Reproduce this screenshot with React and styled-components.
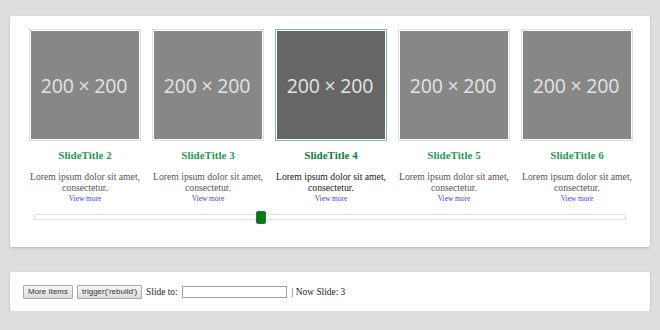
import React from "react";
import styled, { createGlobalStyle } from "styled-components";

const GlobalStyle = createGlobalStyle`
    html, body {
        margin: 0;
        padding: 0;
        background: #dedede;
        font-family: "Liberation Serif", "Times New Roman", serif;
    }
`

const Page = styled.div`
    padding: 16px 10px 0 10px;
    width: 640px;
`

const Panel = styled.section`
    background: #fff;
    box-shadow: 0 1px 3px rgba(0, 0, 0, 0.18);
    border-radius: 2px;
`

const CarouselPanel = styled(Panel)`
    padding: 13px 16px 25px 19px;
    height: 193px;
`

const Slides = styled.div`
    display: flex;
    gap: 11px;
`

const Slide = styled.div`
    width: 112px;
    display: flex;
    flex-direction: column;
    align-items: center;
    text-align: center;
`

const Frame = styled.div`
    border: 1px solid ${p => (p.$active ? "#7cc29c" : "#dddddd")};
    padding: 1px;
    background: #fff;
`

const Placeholder = styled.div`
    width: 108px;
    height: 108px;
    background: ${p => (p.$active ? "#666666" : "#878787")};
    color: #e4e4e4;
    display: flex;
    align-items: center;
    justify-content: center;
    font-family: "Open Sans", "Noto Sans", sans-serif;
    font-size: 19.5px;
    letter-spacing: -0.2px;
    padding-right: 2px;
    box-sizing: border-box;
`

const Title = styled.h4`
    margin: 7px 0 0 0;
    font-size: 11px;
    line-height: 14px;
    font-weight: bold;
    color: ${p => (p.$active ? "#0b7e40" : "#1f9a56")};
`

const Desc = styled.p`
    margin: 9px -4px 0 -4px;
    font-size: 9.7px;
    line-height: 11px;
    white-space: nowrap;
    color: ${p => (p.$active ? "#1a1a1a" : "#555555")};
`

const More = styled.a`
    font-size: 7.4px;
    line-height: 11px;
    color: #3b3bff;
    text-decoration: none;
`

const Track = styled.div`
    position: relative;
    margin: 10px 0 0 5px;
    width: 590px;
    height: 4px;
    border: 1px solid #e2e2e2;
`

const Thumb = styled.div`
    position: absolute;
    top: -4px;
    width: 8px;
    height: 11px;
    background: #008000;
    border: 1px solid #2d6a6a;
    border-radius: 2px;
`

const ControlPanel = styled(Panel)`
    margin-top: 25px;
    height: 39px;
    display: flex;
    align-items: center;
    gap: 3px;
    padding: 0 13px;
    font-size: 9.4px;
    color: #222;
`

const Button = styled.button`
    font-family: "Liberation Sans", Arial, sans-serif;
    font-size: 8px;
    height: 14px;
    padding: 0 4px;
    border: 1px solid #a9a9a9;
    border-radius: 1px;
    background: linear-gradient(#f6f6f6, #dcdcdc);
    color: #333;
    margin-right: 1px;
`

const SlideInput = styled.input`
    width: 101px;
    height: 10px;
    border: 1px solid #a0a0a0;
    padding: 0 1px;
    margin: 0 0 0 1px;
`

const Status = styled.span`
    margin-left: 2px;
`

const slides = [2, 3, 4, 5, 6]

const App = () => {
    const current = 4

    return (
        <Page>
            <GlobalStyle />
            <CarouselPanel>
                <Slides>
                    {slides.map(n => (
                        <Slide key={n}>
                            <Frame $active={n === current}>
                                <Placeholder $active={n === current}>200 × 200</Placeholder>
                            </Frame>
                            <Title $active={n === current}>SlideTitle {n}</Title>
                            <Desc $active={n === current}>Lorem ipsum dolor sit amet,<br />consectetur.</Desc>
                            <More href="#">View more</More>
                        </Slide>
                    ))}
                </Slides>
                <Track>
                    <Thumb style={{ left: 221 }} />
                </Track>
            </CarouselPanel>
            <ControlPanel>
                <Button>More Items</Button>
                <Button>trigger('rebuild')</Button>
                <span>Slide to:</span>
                <SlideInput type="text" />
                <Status>| Now Slide: 3</Status>
            </ControlPanel>
        </Page>
    )
}

export default App;
